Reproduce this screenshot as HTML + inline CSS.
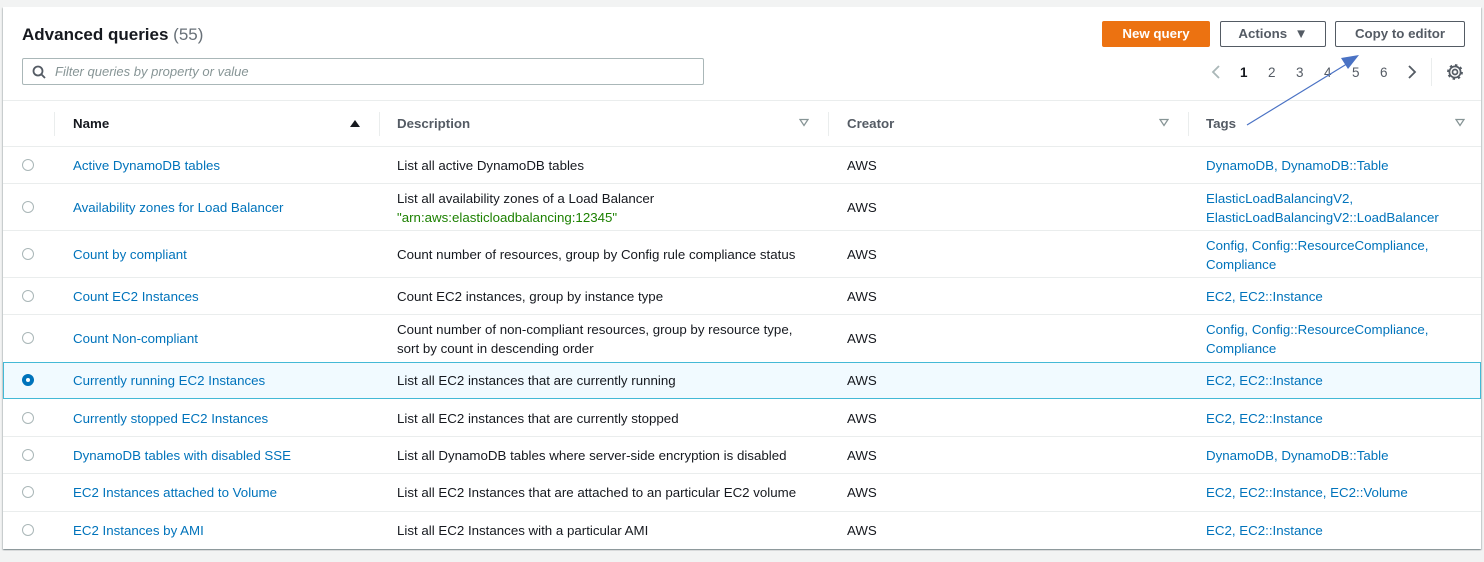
<!DOCTYPE html>
<html><head><style>
body{margin:0;width:1484px;height:562px;background:#f2f3f3;font-family:"Liberation Sans",Arial,sans-serif;position:relative;overflow:hidden;color:#16191f}
.card{position:absolute;left:3px;top:7px;width:1478px;height:542px;background:#fff;box-shadow:0 1px 1px rgba(0,28,36,.3),1px 1px 1px rgba(0,28,36,.15),-1px 1px 1px rgba(0,28,36,.15)}
.a{position:absolute;white-space:nowrap}
.t{font-size:13.3px;line-height:19px}
.lk{color:#0073bb}
.hd{font-weight:bold;font-size:13.3px;color:#545b64}
.btn{position:absolute;top:21px;height:26px;box-sizing:border-box;border:1px solid #545b64;font-weight:bold;font-size:13.3px;color:#545b64;text-align:center;line-height:24px;border-radius:2px;background:#fff}
.line{position:absolute;left:3px;width:1478px;height:1px;background:#eaeded}
.radio{position:absolute;left:22px;width:12px;height:12px;border:1px solid #aab7b8;border-radius:50%;box-sizing:border-box;background:#fff}
.sep{position:absolute;top:112px;width:1px;height:24px;background:#eaeded}
.tri{position:absolute;top:118px}
</style></head><body>
<div class="card"></div>
<div class="a" style="left:22px;top:25px;font-size:17px;font-weight:bold">Advanced queries <span style="font-weight:normal;color:#687078">(55)</span></div>
<div style="position:absolute;left:22px;top:58px;width:682px;height:27px;border:1px solid #aab7b8;box-sizing:border-box;border-radius:2px;background:#fff"></div>
<svg class="a" style="left:32px;top:65px" width="14" height="14" viewBox="0 0 14 14"><circle cx="6" cy="6" r="4.5" fill="none" stroke="#545b64" stroke-width="1.8"/><path d="M9.3 9.3L13 13" stroke="#545b64" stroke-width="1.8"/></svg>
<div class="a" style="left:55px;top:64px;font-size:13px;font-style:italic;color:#879596">Filter queries by property or value</div>
<div class="btn" style="left:1102px;width:108px;background:#ec7211;border-color:#ec7211;color:#fff">New query</div>
<div class="btn" style="left:1220px;width:106px">Actions &nbsp;▼</div>
<div class="btn" style="left:1335px;width:130px">Copy to editor</div>
<svg class="a" style="left:1210px;top:64px" width="12" height="16" viewBox="0 0 12 16"><path d="M9 2L3 8l6 6" fill="none" stroke="#aab7b8" stroke-width="1.8"/></svg>
<div class="a" style="left:1240px;top:65px;font-size:13.5px;font-weight:bold">1</div>
<div class="a" style="left:1268px;top:65px;font-size:13.5px;color:#545b64">2</div>
<div class="a" style="left:1296px;top:65px;font-size:13.5px;color:#545b64">3</div>
<div class="a" style="left:1324px;top:65px;font-size:13.5px;color:#545b64">4</div>
<div class="a" style="left:1352px;top:65px;font-size:13.5px;color:#545b64">5</div>
<div class="a" style="left:1380px;top:65px;font-size:13.5px;color:#545b64">6</div>
<svg class="a" style="left:1406px;top:64px" width="12" height="16" viewBox="0 0 12 16"><path d="M3 2l6 6-6 6" fill="none" stroke="#545b64" stroke-width="1.8"/></svg>
<div style="position:absolute;left:1431px;top:58px;width:1px;height:28px;background:#eaeded"></div>
<svg class="a" style="left:1446px;top:63px" width="18" height="18" viewBox="0 0 18 18"><circle cx="9" cy="9" r="2.5" fill="none" stroke="#545b64" stroke-width="1.7"/><circle cx="9" cy="9" r="5.6" fill="none" stroke="#545b64" stroke-width="1.7"/><circle cx="9" cy="9" r="6.8" fill="none" stroke="#545b64" stroke-width="2.2" stroke-dasharray="2.4 2.9"/></svg>
<div class="line" style="top:100px"></div>
<div class="sep" style="left:54px"></div><div class="sep" style="left:379px"></div><div class="sep" style="left:828px"></div><div class="sep" style="left:1188px"></div>
<div class="a hd" style="left:73px;top:116px;color:#16191f">Name</div>
<svg class="a" style="left:349px;top:119px" width="12" height="9"><polygon points="1,8 11,8 6,1" fill="#16191f"/></svg>
<div class="a hd" style="left:397px;top:116px">Description</div><svg class="tri" style="left:799px" width="10" height="9"><polygon points="1,1.5 9,1.5 5,7.5" fill="none" stroke="#879596" stroke-width="1.3"/></svg>
<div class="a hd" style="left:847px;top:116px">Creator</div><svg class="tri" style="left:1159px" width="10" height="9"><polygon points="1,1.5 9,1.5 5,7.5" fill="none" stroke="#879596" stroke-width="1.3"/></svg>
<div class="a hd" style="left:1206px;top:116px">Tags</div><svg class="tri" style="left:1455px" width="10" height="9"><polygon points="1,1.5 9,1.5 5,7.5" fill="none" stroke="#879596" stroke-width="1.3"/></svg>
<div class="line" style="top:146px"></div>

<div class="radio" style="top:159px"></div><div class="a t lk" style="left:73px;top:156px">Active DynamoDB tables</div><div class="a t" style="left:397px;top:156px">List all active DynamoDB tables</div><div class="a t" style="left:847px;top:156px">AWS</div><div class="a t lk" style="left:1206px;top:156px">DynamoDB, DynamoDB::Table</div>
<div class="line" style="top:183px"></div>
<div class="radio" style="top:201px"></div><div class="a t lk" style="left:73px;top:198px">Availability zones for Load Balancer</div><div class="a t" style="left:397px;top:189px">List all availability zones of a Load Balancer<br><span style="color:#1d8102">"arn:aws:elasticloadbalancing:12345"</span></div><div class="a t" style="left:847px;top:198px">AWS</div><div class="a t lk" style="left:1206px;top:189px">ElasticLoadBalancingV2,<br>ElasticLoadBalancingV2::LoadBalancer</div>
<div class="line" style="top:230px"></div>
<div class="radio" style="top:248px"></div><div class="a t lk" style="left:73px;top:245px">Count by compliant</div><div class="a t" style="left:397px;top:245px">Count number of resources, group by Config rule compliance status</div><div class="a t" style="left:847px;top:245px">AWS</div><div class="a t lk" style="left:1206px;top:236px">Config, Config::ResourceCompliance,<br>Compliance</div>
<div class="line" style="top:277px"></div>
<div class="radio" style="top:290px"></div><div class="a t lk" style="left:73px;top:287px">Count EC2 Instances</div><div class="a t" style="left:397px;top:287px">Count EC2 instances, group by instance type</div><div class="a t" style="left:847px;top:287px">AWS</div><div class="a t lk" style="left:1206px;top:287px">EC2, EC2::Instance</div>
<div class="line" style="top:314px"></div>
<div class="radio" style="top:332px"></div><div class="a t lk" style="left:73px;top:329px">Count Non-compliant</div><div class="a t" style="left:397px;top:320px">Count number of non-compliant resources, group by resource type,<br>sort by count in descending order</div><div class="a t" style="left:847px;top:329px">AWS</div><div class="a t lk" style="left:1206px;top:320px">Config, Config::ResourceCompliance,<br>Compliance</div>
<div style="position:absolute;left:3px;top:362px;width:1478px;height:37px;box-sizing:border-box;background:#f1faff;border:1px solid #44b9d6"></div>
<div class="radio" style="top:374px;border:4px solid #0073bb"></div><div class="a t lk" style="left:73px;top:371px">Currently running EC2 Instances</div><div class="a t" style="left:397px;top:371px">List all EC2 instances that are currently running</div><div class="a t" style="left:847px;top:371px">AWS</div><div class="a t lk" style="left:1206px;top:371px">EC2, EC2::Instance</div>
<div class="radio" style="top:412px"></div><div class="a t lk" style="left:73px;top:409px">Currently stopped EC2 Instances</div><div class="a t" style="left:397px;top:409px">List all EC2 instances that are currently stopped</div><div class="a t" style="left:847px;top:409px">AWS</div><div class="a t lk" style="left:1206px;top:409px">EC2, EC2::Instance</div>
<div class="line" style="top:436px"></div>
<div class="radio" style="top:449px"></div><div class="a t lk" style="left:73px;top:446px">DynamoDB tables with disabled SSE</div><div class="a t" style="left:397px;top:446px">List all DynamoDB tables where server-side encryption is disabled</div><div class="a t" style="left:847px;top:446px">AWS</div><div class="a t lk" style="left:1206px;top:446px">DynamoDB, DynamoDB::Table</div>
<div class="line" style="top:473px"></div>
<div class="radio" style="top:486px"></div><div class="a t lk" style="left:73px;top:483px">EC2 Instances attached to Volume</div><div class="a t" style="left:397px;top:483px">List all EC2 Instances that are attached to an particular EC2 volume</div><div class="a t" style="left:847px;top:483px">AWS</div><div class="a t lk" style="left:1206px;top:483px">EC2, EC2::Instance, EC2::Volume</div>
<div class="line" style="top:511px"></div>
<div class="radio" style="top:524px"></div><div class="a t lk" style="left:73px;top:521px">EC2 Instances by AMI</div><div class="a t" style="left:397px;top:521px">List all EC2 Instances with a particular AMI</div><div class="a t" style="left:847px;top:521px">AWS</div><div class="a t lk" style="left:1206px;top:521px">EC2, EC2::Instance</div>

<svg class="a" style="left:0;top:0" width="1484" height="562"><line x1="1247" y1="125" x2="1350" y2="62" stroke="#4a72c4" stroke-width="1.2"/><polygon points="1359,55 1341,58 1348,69" fill="#4a72c4"/></svg>
</body></html>
